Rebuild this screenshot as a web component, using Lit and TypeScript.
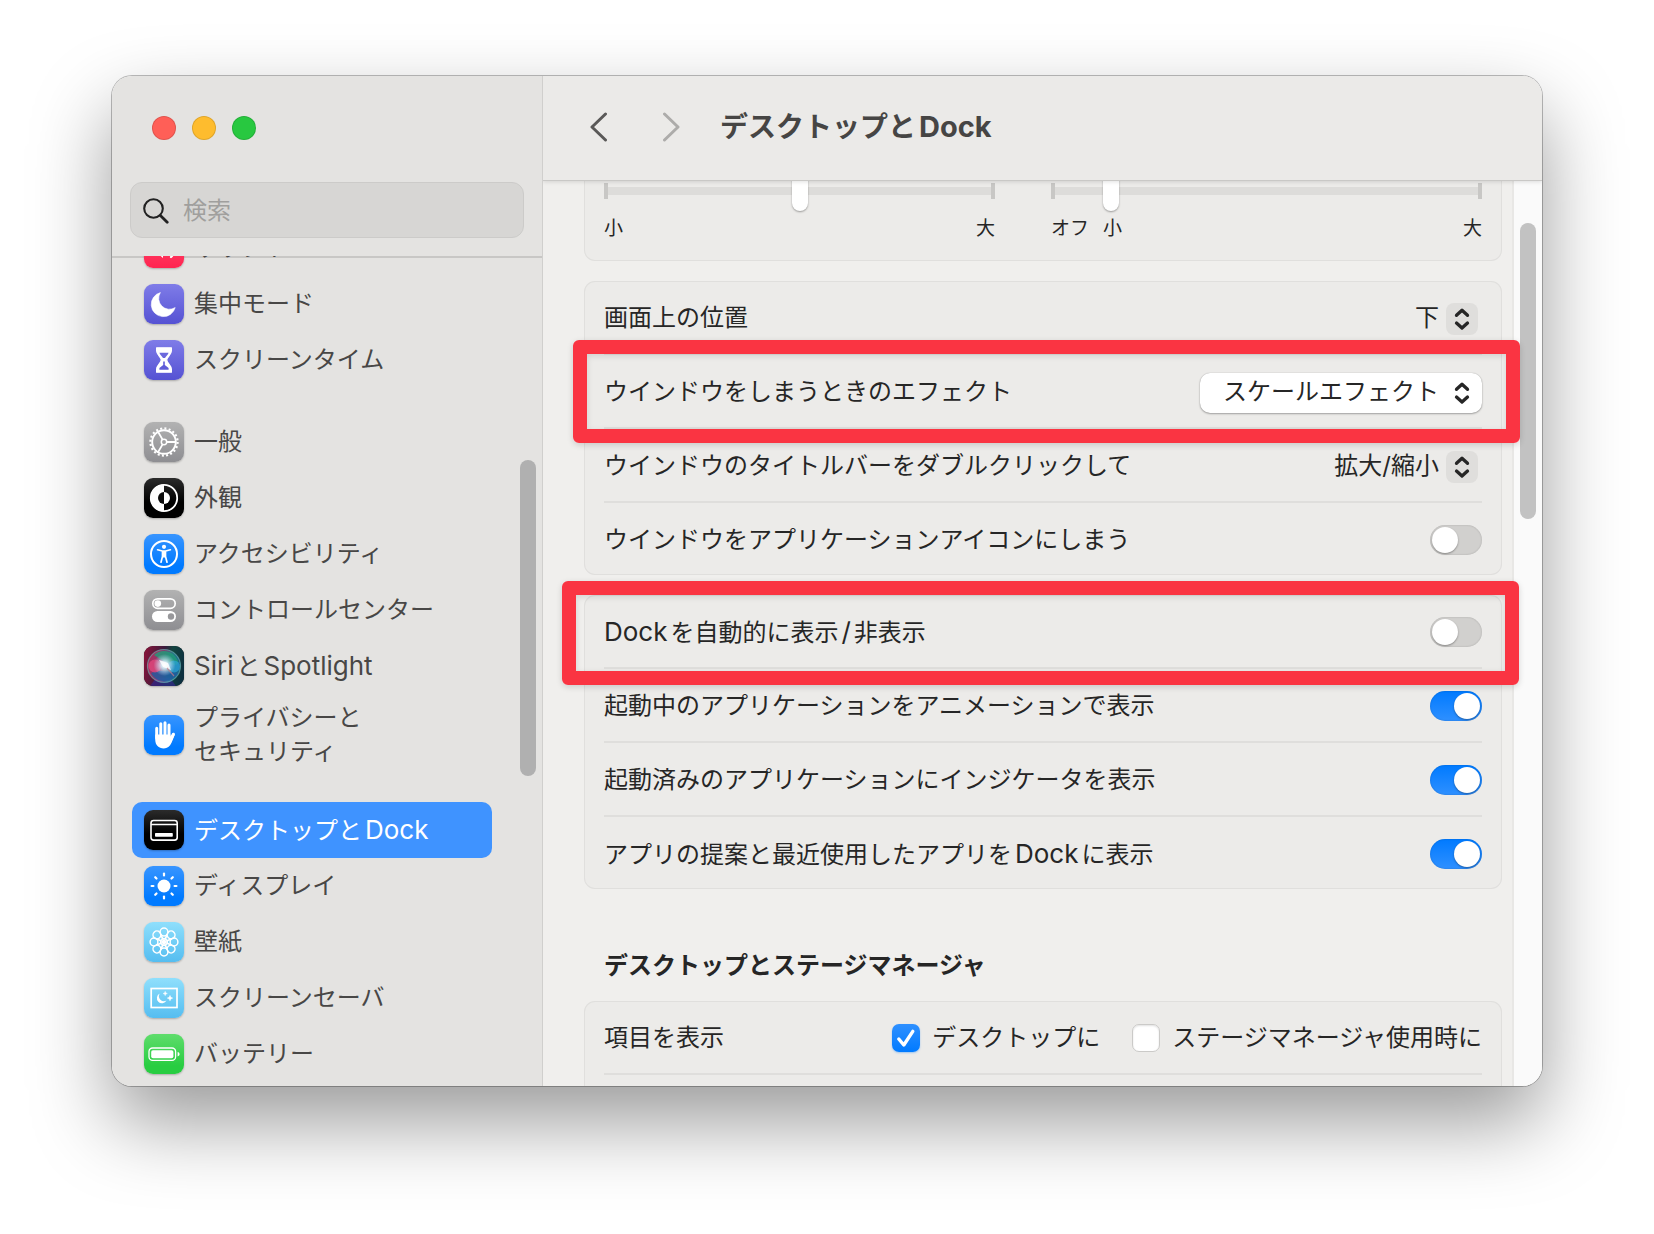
import { LitElement, html, svg, css, nothing } from "lit";
import type { TemplateResult, SVGTemplateResult } from "lit";
import { customElement, property } from "lit/decorators.js";
import { classMap } from "lit/directives/class-map.js";

/* ---------- shared helpers ---------- */

// Latin words are set slightly larger than the surrounding kana and kanji,
// with a little air wherever the two scripts meet.
const mixed = (text: string) =>
  text
    .split(/([A-Za-z]+|\/)/)
    .map((part, i, all) =>
      i % 2
        ? html`<span class=${classMap({ latin: true, before: !!all[i - 1], after: !!all[i + 1] })}>${part}</span>`
        : part,
    );

const rotations = (count: number) => Array.from({ length: count }, (_, i) => (360 / count) * i);

const glyphs: Record<string, SVGTemplateResult> = {
  sound: svg`
    <path d="M8 16h4l7-6v20l-7-6H8z" fill="#fff"/>
    <path d="M23 15c3 3 3 7 0 10M27 11c5 5 5 13 0 18" fill="none" stroke="#fff" stroke-width="2.200" stroke-linecap="round"/>`,
  moon: svg`<path d="M16.400 8.600A12.200 12.200 0 1 0 31.200 23.600A10.800 10.800 0 0 1 16.400 8.600Z" fill="#fff" stroke="#fff" stroke-width=".6" stroke-linejoin="round"/>`,
  hourglass: svg`
    <path d="M12.600 7.800h14.800v3c0 4-4.600 6.400-4.600 9.200s4.600 5.200 4.600 9.200v3H12.600v-3c0-4 4.600-6.400 4.600-9.200s-4.600-5.200-4.600-9.200z" fill="#fff" stroke="#fff" stroke-width="1.200" stroke-linejoin="round"/>
    <path d="M15.400 12.800h9.200c-.6 2-2.600 3.600-3.600 5.200h-2c-1-1.600-3-3.200-3.600-5.200z" fill="#6b68dd"/>
    <path d="M19.200 21.600h1.600v3.400l3.800 3v1.800h-9.200V28l3.800-3z" fill="#5f5cd8"/>`,
  gear: svg`
    <g fill="none" stroke="#fff">
      <circle cx="20" cy="20" r="13.600" stroke-width="2.200" stroke-dasharray="2 2.273"/>
      <circle cx="20" cy="20" r="11.800" stroke-width="1.900"/>
      <circle cx="20" cy="20" r="2.700" stroke-width="1.500"/>
      <path d="M22.800 20H32M18.600 17.600L14 9.700M18.600 22.400L14 30.300" stroke-width="1.800"/>
    </g>`,
  appearance: svg`
    <circle cx="20" cy="20" r="13.200" fill="none" stroke="#fff" stroke-width="1.800"/>
    <path d="M20 6.500a13.500 13.500 0 0 0 0 27z" fill="#fff"/>
    <path d="M20 14a6 6 0 0 0 0 12z" fill="#0b0b0b"/>
    <path d="M20 14a6 6 0 0 1 0 12z" fill="#fff"/>`,
  accessibility: svg`
    <circle cx="20" cy="20" r="13" fill="none" stroke="#fff" stroke-width="2"/>
    <circle cx="20" cy="12.800" r="2.100" fill="#fff"/>
    <path d="M13.600 15.800l4.700 1.200h3.400l4.700-1.200M18.700 17.500h2.600M18.500 17.400v5l-1.500 5.800M21.500 17.400v5l1.500 5.800" fill="none" stroke="#fff" stroke-width="1.700" stroke-linecap="round" stroke-linejoin="round"/>
    <path d="M18 17h4v4.500l-1 2h-2l-1-2z" fill="#fff"/>`,
  controls: svg`
    <rect x="8.800" y="8.800" width="22.400" height="9.600" rx="4.800" fill="none" stroke="#fff" stroke-width="1.700"/>
    <circle cx="13.800" cy="13.600" r="3.300" fill="#fff"/>
    <rect x="8" y="21" width="24" height="11" rx="5.500" fill="#fff"/>
    <circle cx="27" cy="26.500" r="3.200" fill="#98989b"/>`,
  siri: svg`
    <defs>
      <linearGradient id="siri-bg" x1="0" y1="0.300" x2="1" y2="0.500">
        <stop offset="0" stop-color="#86143a"/><stop offset=".45" stop-color="#3a1b3c"/><stop offset=".65" stop-color="#12443f"/><stop offset="1" stop-color="#0d3040"/>
      </linearGradient>
      <radialGradient id="siri-core" cx=".5" cy=".5" r=".5">
        <stop offset="0" stop-color="#fff"/><stop offset=".3" stop-color="#d8f0fa" stop-opacity=".9"/><stop offset="1" stop-color="#bcd8f0" stop-opacity="0"/>
      </radialGradient>
      <linearGradient id="siri-orb" x1="0" y1=".4" x2="1" y2=".6">
        <stop offset="0" stop-color="#e03a74"/><stop offset=".4" stop-color="#c0609c"/><stop offset=".7" stop-color="#3a9cc0"/><stop offset="1" stop-color="#1c8fd0"/>
      </linearGradient>
    </defs>
    <rect width="40" height="40" fill="url(#siri-bg)"/>
    <path d="M6 40h26l-6-8H12z" fill="#33268c" opacity=".7"/>
    <circle cx="20" cy="20" r="16.500" fill="url(#siri-orb)" opacity=".55"/>
    <path d="M10 9c7-7 20-5 24 6 1 4-3 5-8 3-6-2-10-5-16-9z" fill="#1f9c78" opacity=".8"/>
    <path d="M7 27c8-3 16-2 27 0-5 9-21 12-27 0z" fill="#1f5ba0" opacity=".8"/>
    <circle cx="11" cy="20" r="6.500" fill="#ea4a80" opacity=".7"/>
    <circle cx="30" cy="20.500" r="6" fill="#2ba2dc" opacity=".7"/>
    <circle cx="20" cy="20" r="16.500" fill="none" stroke="#6fb9b8" stroke-opacity=".6" stroke-width="1.200"/>
    <circle cx="20.500" cy="19" r="11" fill="url(#siri-core)"/>
    <path d="M15 14l9 3 3 7-8-3z" fill="#fff" opacity=".8"/>
    <path d="M23 22l7 8" stroke="#c87d8a" stroke-width="1.200" opacity=".7"/>`,
  hand: svg`
    <g stroke="#fff" stroke-linecap="round" stroke-width="3" fill="none">
      <path d="M12.700 13.200V23M16.800 8.800V22M21 7.800V22M25 10V22"/>
      <path d="M29.400 19.200l-3.200 7" stroke-width="3"/>
    </g>
    <path d="M11.200 19.600h15.300v2l2.400-3.500 2 1.500-3.400 8.200c-1.600 3.800-4.200 5.600-7.700 5.600-5.200 0-8.600-3.400-8.600-9.200z" fill="#fff"/>`,
  dock: svg`
    <rect x="7" y="10.500" width="26.200" height="19.600" rx="2.600" fill="none" stroke="#fff" stroke-width="1.600"/>
    <path d="M7 14.500h26" stroke="#fff" stroke-width="1.400"/>
    <rect x="11" y="23" width="17.800" height="3.800" rx=".8" fill="#fff"/>`,
  sun: svg`
    <circle cx="20" cy="20" r="6.500" fill="#fff"/>
    ${rotations(8).map((a) => svg`<path d="M20 9.400V7.600" transform="rotate(${a} 20 20)" stroke="#fff" stroke-width="2.200" stroke-linecap="round"/>`)}`,
  flower: svg`
    ${rotations(8).map((a) => svg`<g transform="rotate(${a} 20 20)" fill="none" stroke="#fff" stroke-width="1.500"><circle cx="20" cy="10" r="3.900"/><path d="M16.800 12.200L20 20l3.200-7.800" stroke-width="1.300"/></g>`)}
    <circle cx="20" cy="20" r="3.600" fill="none" stroke="#fff" stroke-width="1.300"/>`,
  saver: svg`
    <rect x="7.200" y="10.500" width="25.800" height="19" fill="none" stroke="#fff" stroke-width="1.700"/>
    <path d="M15.700 15.600a5.100 5.100 0 1 0 6.800 6.900a5 5 0 0 1-6.800-6.900z" fill="#fff"/>
    <path d="M21.200 13.400l.6 1.500 1.500.6-1.500.6-.6 1.500-.6-1.500-1.500-.6 1.500-.6zM26 17.400l.8 1.900 1.900.8-1.900.8-.8 1.900-.8-1.900-1.900-.8 1.900-.8z" fill="#fff" stroke="#fff" stroke-width=".5"/>`,
  battery: svg`
    <rect x="5" y="14" width="26.600" height="12.400" rx="3.600" fill="none" stroke="#fff" stroke-width="1.300"/>
    <rect x="7.200" y="16.200" width="22.200" height="8" rx="1.800" fill="#fff"/>
    <path d="M33.600 18c2.600.6 2.600 3.800 0 4.400z" fill="#fff"/>`,
};

interface Entry {
  icon: string;
  tone: string;
  label: string[];
  selected?: boolean;
}

const groups: Entry[][] = [
  [
    { icon: "sound", tone: "red", label: ["サウンド"] },
    { icon: "moon", tone: "indigo", label: ["集中モード"] },
    { icon: "hourglass", tone: "indigo", label: ["スクリーンタイム"] },
  ],
  [
    { icon: "gear", tone: "gray", label: ["一般"] },
    { icon: "appearance", tone: "black", label: ["外観"] },
    { icon: "accessibility", tone: "blue", label: ["アクセシビリティ"] },
    { icon: "controls", tone: "gray", label: ["コントロールセンター"] },
    { icon: "siri", tone: "black", label: ["SiriとSpotlight"] },
    { icon: "hand", tone: "blue", label: ["プライバシーと", "セキュリティ"] },
  ],
  [
    { icon: "dock", tone: "black", label: ["デスクトップとDock"], selected: true },
    { icon: "sun", tone: "blue", label: ["ディスプレイ"] },
    { icon: "flower", tone: "sky", label: ["壁紙"] },
    { icon: "saver", tone: "sky", label: ["スクリーンセーバ"] },
    { icon: "battery", tone: "green", label: ["バッテリー"] },
  ],
];

const base = css`
  * {
    box-sizing: border-box;
  }
  ul,
  h1,
  h2 {
    margin: 0;
    padding: 0;
    list-style: none;
  }
  input,
  select,
  button {
    margin: 0;
    font: inherit;
    color: inherit;
  }
  .latin {
    font-size: 26px;
  }
  .before {
    margin-left: 3px;
  }
  .after {
    margin-right: 3px;
  }
`;

/* ---------- sidebar ---------- */

@customElement("settings-sidebar")
export class SettingsSidebar extends LitElement {
  static styles = [
    base,
    css`
      :host {
        display: flex;
        flex-direction: column;
        min-height: 0;
        background: #e4e3e1;
        border-right: 1px solid #d0cfcd;
        color: #484746;
        position: relative;
      }
      .lights {
        display: flex;
        gap: 16px;
        padding: 40px 40px 0;
      }
      .light {
        width: 24px;
        height: 24px;
        padding: 0;
        border: 1px solid rgba(0, 0, 0, 0.12);
        border-radius: 50%;
      }
      .close {
        background: #ff5f57;
      }
      .minimize {
        background: #febc2e;
      }
      .zoom {
        background: #28c840;
      }
      .search {
        display: flex;
        align-items: center;
        gap: 14px;
        height: 56px;
        margin: 42px 18px 18px;
        padding: 2px 12px 0;
        border: 1px solid #cccbc9;
        border-radius: 12px;
        background: #d7d6d4;
      }
      .search svg {
        flex: none;
        color: #222;
      }
      .field {
        flex: 1;
        min-width: 0;
        padding: 0;
        border: 0;
        outline: 0;
        background: none;
        line-height: 34px;
      }
      .field::placeholder {
        color: #a09f9d;
        opacity: 1;
      }
      .scroller {
        flex: 1;
        min-height: 0;
        overflow: hidden;
        box-shadow: inset 0 2px #c8c7c5;
      }
      .list {
        display: flex;
        flex-direction: column;
        gap: 26px;
        margin: -36px 50px 0 20px;
      }
      .item {
        display: flex;
        align-items: center;
        gap: 10px;
        min-height: 56px;
        padding: 6px 12px 7px;
        border-radius: 10px;
        color: inherit;
        text-decoration: none;
        line-height: 34px;
      }
      .text {
        padding-top: 1px;
      }
      .selected {
        background: #3f93ff;
        color: #fff;
      }
      .line {
        display: block;
      }
      .tile {
        flex: none;
        width: 40px;
        height: 40px;
        border-radius: 9px;
        overflow: hidden;
        box-shadow: 0 1px 2px rgba(0, 0, 0, 0.25);
      }
      .tile svg {
        display: block;
      }
      .red {
        background: linear-gradient(#ff4f70, #ff2450);
      }
      .indigo {
        background: linear-gradient(#7f7ce8, #5552d3);
      }
      .gray {
        background: linear-gradient(#b2b2b2, #8e8e92);
      }
      .black {
        background: linear-gradient(#2b2b2b, #000 60%);
      }
      .blue {
        background: linear-gradient(#3895ff, #007aff 80%);
      }
      .sky {
        background: linear-gradient(#8fdffc, #55bdf0);
      }
      .green {
        background: linear-gradient(#5fdd6c, #28cd41 80%);
      }
      .thumb {
        position: absolute;
        right: 6px;
        top: 384px;
        width: 16px;
        height: 316px;
        border-radius: 8px;
        background: #b0b0b0;
      }
    `,
  ];

  private item(entry: Entry): TemplateResult {
    return html`<li>
      <a
        class=${classMap({ item: true, selected: !!entry.selected })}
        href="#${entry.icon}"
        aria-current=${entry.selected ? "page" : nothing}
      >
        <span class="tile ${entry.tone}">
          <svg width="40" height="40" viewBox="0 0 40 40" aria-hidden="true">${glyphs[entry.icon]}</svg>
        </span>
        <span class="text">${entry.label.map((l) => html`<span class="line">${mixed(l)}</span>`)}</span>
      </a>
    </li>`;
  }

  render() {
    return html`
      <div class="lights">
        <button class="light close" aria-label="閉じる"></button>
        <button class="light minimize" aria-label="しまう"></button>
        <button class="light zoom" aria-label="拡大"></button>
      </div>
      <label class="search">
        <svg width="26" height="26" viewBox="0 0 26 26" fill="none" stroke="currentColor" stroke-linecap="round" aria-hidden="true">
          <circle cx="10.500" cy="10.500" r="9.300" stroke-width="2.100" />
          <path d="M17.400 17.400l6.800 6.800" stroke-width="2.800" />
        </svg>
        <input class="field" type="text" placeholder="検索" aria-label="検索" />
      </label>
      <nav class="scroller">
        <div class="list">${groups.map((g) => html`<ul>${g.map((e) => this.item(e))}</ul>`)}</div>
      </nav>
      <div class="thumb"></div>
    `;
  }
}

/* ---------- one row of a settings card ---------- */

@customElement("settings-row")
export class SettingsRow extends LitElement {
  @property() label = "";
  @property() kind: "switch" | "select" | "checks" = "switch";
  @property() value = "";
  @property({ type: Boolean }) on = false;
  @property({ type: Boolean }) raised = false;

  static styles = [
    base,
    css`
      :host {
        display: flex;
        align-items: center;
        justify-content: space-between;
        gap: 16px;
        height: 74px;
        padding-top: 2px;
        border-bottom: 2px solid #dfdedc;
        position: relative;
      }
      :host(:last-child) {
        height: 72px;
        border-bottom: 0;
      }
      .switch {
        appearance: none;
        width: 52px;
        height: 30px;
        padding: 2px;
        border-radius: 15px;
        background: #d1d0ce;
        box-shadow: inset 0 0 2px rgba(0, 0, 0, 0.2);
        display: flex;
      }
      .switch::before {
        content: "";
        width: 26px;
        height: 26px;
        border-radius: 50%;
        background: #fff;
        box-shadow: 0 1px 2px rgba(0, 0, 0, 0.35);
      }
      .switch:checked {
        justify-content: flex-end;
        background: linear-gradient(#007aff, #2f90ff);
      }
      .pop {
        display: grid;
        align-items: center;
        padding-top: 2px;
      }
      .pop > * {
        grid-area: 1 / 1;
      }
      .select {
        appearance: none;
        height: 40px;
        padding: 0 43px 2px 23px;
        border: 0;
        border-radius: 10px;
        background: none;
        text-align: right;
        line-height: 38px;
      }
      .raised .select {
        background: #fff;
        box-shadow: 0 0 1px rgba(0, 0, 0, 0.3), 0 1px 2px rgba(0, 0, 0, 0.3);
      }
      .arrows {
        justify-self: end;
        width: 32px;
        height: 32px;
        margin-right: 4px;
        border-radius: 8px;
        background: #dfdedc;
        pointer-events: none;
      }
      .raised .arrows {
        background: none;
      }
      .checks {
        display: flex;
        gap: 32px;
      }
      .check {
        display: flex;
        align-items: center;
        gap: 12px;
        line-height: 34px;
      }
      .mark {
        display: grid;
        place-items: center;
      }
      .mark > * {
        grid-area: 1 / 1;
      }
      .box {
        appearance: none;
        width: 28px;
        height: 28px;
        border: 1px solid #cbcac8;
        border-radius: 7px;
        background: #fff;
        box-shadow: inset 0 1px 2px rgba(0, 0, 0, 0.12);
      }
      .box:checked {
        border: 0;
        background: linear-gradient(#2f90ff, #007aff);
        box-shadow: 0 1px 2px rgba(0, 122, 255, 0.35);
      }
      .tick {
        display: none;
        pointer-events: none;
      }
      .box:checked + .tick {
        display: block;
      }
    `,
  ];

  private control(): TemplateResult {
    if (this.kind === "select") {
      return html`<span class=${classMap({ pop: true, raised: this.raised })}>
        <select class="select" id="control">
          <option>${this.value}</option>
        </select>
        <svg class="arrows" viewBox="0 0 32 32" fill="none" stroke="#262626" stroke-width="3.300" stroke-linecap="round" stroke-linejoin="round" aria-hidden="true">
          <path d="M10.500 12.300L16 7.300l5.500 5M10.500 20L16 25l5.500-5" />
        </svg>
      </span>`;
    }
    if (this.kind === "checks") {
      return html`<span class="checks">
        ${this.value.split("|").map(
          (text, i) => html`<label class="check">
            <span class="mark">
              <input class="box" type="checkbox" ?checked=${i === 0} />
              <svg class="tick" width="28" height="28" viewBox="0 0 28 28" fill="none" stroke="#fff" stroke-width="3.400" stroke-linecap="round" stroke-linejoin="round" aria-hidden="true">
                <path d="M6.800 15l5 6L20.800 7.400" />
              </svg>
            </span>
            ${text}
          </label>`,
        )}
      </span>`;
    }
    return html`<input class="switch" type="checkbox" role="switch" id="control" ?checked=${this.on} />`;
  }

  render() {
    const caption =
      this.kind === "checks" ? html`<span>${this.label}</span>` : html`<label for="control">${mixed(this.label)}</label>`;
    return html`${caption}${this.control()}`;
  }
}

/* ---------- window ---------- */

@customElement("app-root")
export class AppRoot extends LitElement {
  static styles = [
    base,
    css`
      :host {
        display: flex;
        height: 100vh;
        padding: 76px 112px 148px;
        box-sizing: border-box;
        overflow: hidden;
        background: #fff;
        color: #262626;
        font-family: Inter, "Noto Sans CJK JP", sans-serif;
        font-size: 24px;
        line-height: 34px;
      }
      .window {
        flex: 1;
        min-width: 0;
        display: grid;
        grid-template-columns: 431px minmax(0, 1fr);
        grid-template-rows: minmax(0, 1fr);
        border-radius: 20px;
        box-shadow: 0 0 0 1px rgba(0, 0, 0, 0.26), 0 36px 80px rgba(0, 0, 0, 0.4);
      }
      .side {
        border-radius: 20px 0 0 20px;
        overflow: hidden;
      }
      .pane {
        display: flex;
        flex-direction: column;
        min-height: 0;
        border-radius: 0 20px 20px 0;
        overflow: hidden;
        background: #f0efed;
      }
      .bar {
        flex: none;
        display: flex;
        align-items: center;
        height: 105px;
        padding: 0 44px 2px;
        border-bottom: 1px solid #c9c8c6;
        background: #ebeae8;
        box-shadow: 0 1px 4px rgba(0, 0, 0, 0.12);
        color: #464544;
        z-index: 3;
      }
      .nav {
        display: flex;
        gap: 48px;
        margin-right: 37px;
      }
      .step {
        display: grid;
        place-items: center;
        width: 24px;
        height: 32px;
        padding: 0;
        border: 0;
        background: none;
        color: #5a5958;
      }
      .step:disabled {
        color: #adacaa;
      }
      .title {
        font-size: 28px;
        font-weight: 700;
        line-height: 40px;
      }
      .title .latin {
        font-size: 29px;
      }
      .body {
        flex: 1;
        min-height: 0;
        display: grid;
        grid-template-columns: minmax(0, 1fr) 30px;
        position: relative;
      }
      .content {
        display: flex;
        flex-direction: column;
        gap: 20px;
        min-height: 0;
        padding: 0 10px 0 41px;
      }
      .track {
        border-left: 2px solid #e8e7e5;
        background: #fafafa;
        padding: 42px 6px 0 6px;
      }
      .thumb {
        width: 16px;
        height: 296px;
        border-radius: 8px;
        background: #c2c2c2;
      }
      .card {
        flex: none;
        padding: 0 20px;
        border-radius: 11px;
        background: #ecebe9;
        box-shadow: inset 0 0 0 1px #e0dfdd;
      }
      .sliders {
        display: grid;
        grid-template-columns: 391fr 431fr;
        gap: 56px;
        margin-top: -30px;
        padding: 20px;
      }
      .range {
        appearance: none;
        display: block;
        width: 100%;
        height: 40px;
        background:
          linear-gradient(#c8c7c5, #c8c7c5) left / 4px 16px no-repeat,
          linear-gradient(#c8c7c5, #c8c7c5) right / 4px 16px no-repeat,
          linear-gradient(#dddcda, #dddcda) center / 100% 8px no-repeat;
      }
      .range::-webkit-slider-thumb {
        appearance: none;
        width: 16px;
        height: 40px;
        border-radius: 8px;
        background: #fff;
        box-shadow: 0 1px 2px rgba(0, 0, 0, 0.35);
      }
      .scale {
        display: flex;
        gap: 14px;
        margin-top: 6px;
        font-size: 19px;
        line-height: 24px;
      }
      .end {
        margin-left: auto;
      }
      .heading {
        margin: 40px 20px -2px;
        font-size: 24px;
        font-weight: 700;
        line-height: 34px;
      }
      .rest {
        height: 72px;
      }
      .marked::after {
        content: "";
        position: absolute;
        inset: -15px -38px -16px -31px;
        border: 14px solid #fa3442;
        border-radius: 6px;
        box-shadow: 0 2px 6px rgba(0, 0, 0, 0.15), inset 0 2px 6px rgba(0, 0, 0, 0.12);
        pointer-events: none;
        z-index: 2;
      }
      .wide::after {
        inset: -14px -37px -18px -42px;
      }
    `,
  ];

  private chevron(d: string) {
    return html`<svg width="20" height="30" viewBox="0 0 20 30" fill="none" stroke="currentColor" stroke-width="3" stroke-linecap="round" stroke-linejoin="round" aria-hidden="true">
      <path d=${d} />
    </svg>`;
  }

  render() {
    return html`
      <div class="window">
        <settings-sidebar class="side"></settings-sidebar>
        <main class="pane">
          <header class="bar">
            <div class="nav">
              <button class="step" aria-label="戻る">${this.chevron("M16.500 2L3 15l13.500 13")}</button>
              <button class="step" aria-label="進む" disabled>${this.chevron("M3.500 2l13.500 13-13.500 13")}</button>
            </div>
            <h1 class="title">${mixed("デスクトップとDock")}</h1>
          </header>
          <div class="body">
            <div class="content">
              <section class="card sliders">
                <div>
                  <input class="range" type="range" min="0" max="100" value="50" aria-label="サイズ" />
                  <div class="scale"><span>小</span><span class="end">大</span></div>
                </div>
                <div>
                  <input class="range" type="range" min="0" max="200" value="25" aria-label="拡大" />
                  <div class="scale"><span>オフ</span><span>小</span><span class="end">大</span></div>
                </div>
              </section>
              <section class="card">
                <settings-row label="画面上の位置" kind="select" value="下"></settings-row>
                <settings-row class="marked" label="ウインドウをしまうときのエフェクト" kind="select" value="スケールエフェクト" raised></settings-row>
                <settings-row label="ウインドウのタイトルバーをダブルクリックして" kind="select" value="拡大/縮小"></settings-row>
                <settings-row label="ウインドウをアプリケーションアイコンにしまう"></settings-row>
              </section>
              <section class="card">
                <settings-row class="marked wide" label="Dockを自動的に表示/非表示"></settings-row>
                <settings-row label="起動中のアプリケーションをアニメーションで表示" on></settings-row>
                <settings-row label="起動済みのアプリケーションにインジケータを表示" on></settings-row>
                <settings-row label="アプリの提案と最近使用したアプリをDockに表示" on></settings-row>
              </section>
              <h2 class="heading">デスクトップとステージマネージャ</h2>
              <section class="card">
                <settings-row label="項目を表示" kind="checks" value="デスクトップに|ステージマネージャ使用時に"></settings-row>
                <div class="rest"></div>
              </section>
            </div>
            <div class="track"><div class="thumb"></div></div>
          </div>
        </main>
      </div>
    `;
  }
}
